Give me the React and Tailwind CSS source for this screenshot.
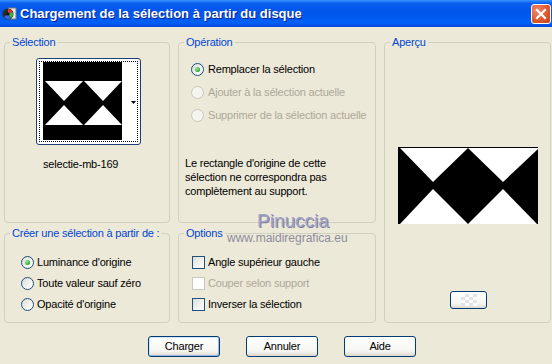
import React from 'react';

const Radio = ({ checked, disabled }) => (
  <span
    className={`w-[13px] h-[13px] rounded-full border flex items-center justify-center shrink-0 ${
      disabled
        ? 'border-[#CAC8BB] bg-[#F5F4EE]'
        : 'border-[#1C5180] bg-[linear-gradient(135deg,#DCDCD7_0%,#FFFFFF_90%)]'
    }`}
  >
    {checked && (
      <span className="w-[5px] h-[5px] rounded-full bg-[radial-gradient(circle_at_35%_35%,#A0EDA0,#21A121_75%)]" />
    )}
  </span>
);

const Check = ({ disabled }) => (
  <span
    className={`w-[13px] h-[13px] border shrink-0 ${
      disabled
        ? 'border-[#CAC8BB] bg-white'
        : 'border-[#1C5180] bg-[linear-gradient(135deg,#DCDCD7_0%,#FFFFFF_90%)]'
    }`}
  />
);

const Group = ({ label, className = '', children }) => (
  <fieldset className={`border border-[#D0D0BF] rounded-[4px] min-w-0 ${className}`}>
    <legend className="ml-[5px] px-[2px] text-[11px] leading-[13px] text-[#0046D5]">{label}</legend>
    {children}
  </fieldset>
);

const Button = ({ children, isDefault }) => (
  <button
    className={`w-[72px] h-[21px] rounded-[3px] border border-[#003C74] text-[11px] text-black bg-[linear-gradient(180deg,#FFFFFF_0%,#F5F5F1_75%,#DCD8CC_100%)] ${
      isDefault ? 'shadow-[inset_1px_1px_0_#CEE7FF,inset_-1px_-1px_0_#98B8EA]' : ''
    }`}
  >
    {children}
  </button>
);

const App = () => {
  return (
    <div className="relative w-[552px] h-[364px] overflow-hidden bg-[#ECE9D8] flex flex-col font-['Liberation_Sans',Arial,sans-serif] tracking-[-0.2px] text-black">
      {/* Title bar */}
      <div className="h-[27px] flex items-center bg-[linear-gradient(180deg,#3C95FF_0%,#0A5FEE_12%,#0055EA_45%,#0060F7_85%,#0047D6_100%)]">
        <svg width="15" height="15" viewBox="0 0 15 15" className="ml-[2px]">
          <rect x="6" y="2" width="8" height="11" fill="#E8E8E8" stroke="#7A7A7A" strokeWidth="1" />
          <circle cx="6" cy="8" r="5.5" fill="#2A2A2A" />
          <path d="M6 8 L6 3 A5 5 0 0 1 10.5 6 Z" fill="#D73A2A" />
          <path d="M6 8 L10.5 6 A5 5 0 0 1 9 12 Z" fill="#3FB33F" />
          <path d="M6 8 L9 12 A5 5 0 0 1 2 11 Z" fill="#2F6FE0" />
          <circle cx="6" cy="8" r="1.6" fill="#111" />
        </svg>
        <span className="ml-[3px] text-[13px] font-bold text-white tracking-normal [text-shadow:1px_1px_0_#0A1E8A]">
          Chargement de la sélection à partir du disque
        </span>
        <button className="ml-auto mr-[1px] w-[20px] h-[20px] rounded-[3px] border border-white flex items-center justify-center bg-[radial-gradient(circle_at_30%_30%,#F08A6A,#E05A2E_55%,#C2401A_100%)]">
          <svg width="12" height="12" viewBox="0 0 12 12">
            <path d="M2 2 L10 10 M10 2 L2 10" stroke="white" strokeWidth="2.2" strokeLinecap="square" />
          </svg>
        </button>
      </div>

      {/* Body */}
      <div className="pt-[9px] pl-[4px]">
        <div className="grid grid-cols-[166px_198px_167px] grid-rows-[187px_96px] gap-x-[8px] gap-y-[4px]">
          <Group label="Sélection">
            <div className="ml-[31px] mt-[9px] w-[105px] h-[87px] rounded-[3px] border border-[#1E3F73] bg-white p-[2px] flex">
              <div className="flex-1 border border-dotted border-black flex items-start">
                <svg width="79" height="78" viewBox="0 0 79 78" className="ml-[3px]">
                  <rect width="79" height="78" fill="#000" />
                  <polygon points="2,19 40,19 21,39" fill="#fff" />
                  <polygon points="41,19 79,19 60,39" fill="#fff" />
                  <polygon points="2,63 40,63 21,43" fill="#fff" />
                  <polygon points="41,63 79,63 60,43" fill="#fff" />
                </svg>
                <svg width="5" height="3" viewBox="0 0 5 3" className="ml-[9px] mt-[39px]">
                  <polygon points="0,0 5,0 2.5,3" fill="#000" />
                </svg>
              </div>
            </div>
            <div className="ml-[38px] mt-[12px] text-[11px] leading-[14px]">selectie-mb-169</div>
          </Group>

          <Group label="Opération">
            <div className="mt-[9px] pl-[12px] text-[11px]">
              <div className="h-[23px] flex items-center gap-[4px]">
                <Radio checked />
                <span>Remplacer la sélection</span>
              </div>
              <div className="h-[23px] flex items-center gap-[4px] text-[#ACA899]">
                <Radio disabled />
                <span>Ajouter à la sélection actuelle</span>
              </div>
              <div className="h-[23px] flex items-center gap-[4px] text-[#ACA899]">
                <Radio disabled />
                <span>Supprimer de la sélection actuelle</span>
              </div>
            </div>
            <p className="mt-[29px] pl-[6px] text-[11px] leading-[14px]">
              Le rectangle d'origine de cette
              <br />
              sélection ne correspondra pas
              <br />
              complètement au support.
            </p>
          </Group>

          <Group label="Aperçu" className="row-span-2">
            <div className="flex flex-col items-center">
              <svg width="140" height="77" viewBox="0 0 140 77" className="mt-[98px] ml-[1px]">
                <rect width="140" height="77" fill="#000" />
                <polygon points="2,1 70,1 35,35" fill="#fff" />
                <polygon points="70,1 140,1 140,2 105,35" fill="#fff" />
                <polygon points="2,77 70,77 35,42" fill="#fff" />
                <polygon points="70,77 139,77 105,42" fill="#fff" />
              </svg>
              <button className="mt-[67px] ml-[2px] w-[37px] h-[18px] rounded-[3px] border border-[#003C74] bg-[linear-gradient(180deg,#FFFFFF_0%,#F5F5F1_75%,#DCD8CC_100%)] flex items-center justify-center">
                <span className="w-[16px] h-[12px] bg-[repeating-conic-gradient(#E4E4E4_0_25%,#FFFFFF_0_50%)] bg-[length:8px_6px]" />
              </button>
            </div>
          </Group>

          <Group label="Créer une sélection à partir de :">
            <div className="mt-[12px] pl-[16px] text-[11px]">
              <div className="h-[21px] flex items-center gap-[3px]">
                <Radio checked />
                <span>Luminance d'origine</span>
              </div>
              <div className="h-[21px] flex items-center gap-[3px]">
                <Radio />
                <span>Toute valeur sauf zéro</span>
              </div>
              <div className="h-[21px] flex items-center gap-[3px]">
                <Radio />
                <span>Opacité d'origine</span>
              </div>
            </div>
          </Group>

          <Group label="Options">
            <div className="mt-[12px] pl-[13px] text-[11px]">
              <div className="h-[21px] flex items-center gap-[3px]">
                <Check />
                <span>Angle supérieur gauche</span>
              </div>
              <div className="h-[21px] flex items-center gap-[3px] text-[#ACA899]">
                <Check disabled />
                <span>Couper selon support</span>
              </div>
              <div className="h-[21px] flex items-center gap-[3px]">
                <Check />
                <span>Inverser la sélection</span>
              </div>
            </div>
          </Group>
        </div>
      </div>

      {/* Buttons */}
      <div className="mt-[13px] ml-[148px] flex gap-[26px]">
        <Button isDefault>Charger</Button>
        <Button>Annuler</Button>
        <Button>Aide</Button>
      </div>

      {/* Watermark */}
      <div className="absolute left-[257px] top-[211px] text-[19px] leading-[19px] tracking-normal text-[#A4A4C6] [text-shadow:1px_1px_0_#7E7E9A] pointer-events-none">
        Pinuccia
      </div>
      <div className="absolute left-[227px] top-[232px] text-[12px] leading-[12px] tracking-normal text-[#8C8C9C] pointer-events-none">
        www.maidiregrafica.eu
      </div>
    </div>
  );
};

export default App;
